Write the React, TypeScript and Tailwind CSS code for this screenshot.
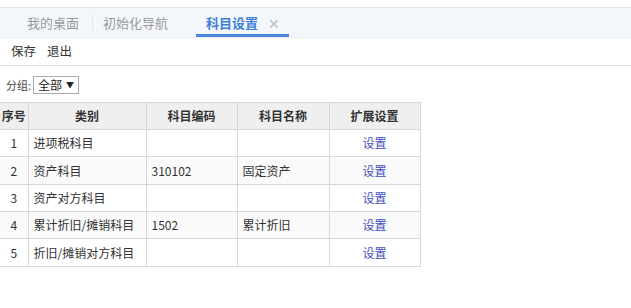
import React from 'react';

interface Row {
  id: number;
  category: string;
  code: string;
  name: string;
}

const rows: Row[] = [
  { id: 1, category: '进项税科目', code: '', name: '' },
  { id: 2, category: '资产科目', code: '310102', name: '固定资产' },
  { id: 3, category: '资产对方科目', code: '', name: '' },
  { id: 4, category: '累计折旧/摊销科目', code: '1502', name: '累计折旧' },
  { id: 5, category: '折旧/摊销对方科目', code: '', name: '' },
];

const font = { fontFamily: '"Noto Sans CJK SC", "Liberation Sans", sans-serif' };

const App: React.FC = () => {
  return (
    <div className="w-[631px] h-[308px] bg-white text-[12px] text-[#333]" style={font}>
      <div className="h-[7px]" />
      <div className="h-[31px] border-t border-[#e3e6ea] border-b border-b-[#e8ecf0] bg-[#f3f7fc] flex items-stretch">
        <div className="w-[27px]" />
        <div className="flex items-center text-[13px] text-[#9a9a9a] pr-[13px] my-[6px] border-r border-[#e4e8ec]">我的桌面</div>
        <div className="flex items-center text-[13px] text-[#9a9a9a] pl-[10px] w-[103px]">初始化导航</div>
        <div className="flex items-center gap-[10px] pl-[10px] pr-[9px] border-b-[3px] border-[#4a87dc] pt-[3px]">
          <span className="text-[13px] font-bold text-[#3d7fd6]">科目设置</span>
          <span className="text-[14px] text-[#b8bcc2] leading-none">✕</span>
        </div>
      </div>
      <div className="h-[28px] flex items-center gap-[11px] pl-[11px] border-b border-[#dcdcdc] text-[12.5px] text-[#333]">
        <span>保存</span>
        <span>退出</span>
      </div>
      <div className="h-[36px] flex items-center pl-[6px] pt-[2px] text-[11px] text-[#444]">
        <span>分组:</span>
        <div className="ml-[2px] w-[46px] h-[18px] border border-[#a9a9a9] bg-white flex items-center justify-between px-[4px] text-[12px] text-[#222]">
          <span>全部</span>
          <span className="text-[8px]">▼</span>
        </div>
      </div>
      <table className="border-collapse ml-0 text-[12px]">
        <thead>
          <tr className="h-[27px] bg-[#efefef] font-bold text-[#333]">
            <th className="w-[28px] border border-[#d8d8d8] border-l-0 text-center font-bold">序号</th>
            <th className="w-[118px] border border-[#d8d8d8] text-center font-bold">类别</th>
            <th className="w-[91px] border border-[#d8d8d8] text-center font-bold">科目编码</th>
            <th className="w-[92px] border border-[#d8d8d8] text-center font-bold">科目名称</th>
            <th className="w-[91px] border border-[#d8d8d8] text-center font-bold">扩展设置</th>
          </tr>
        </thead>
        <tbody>
          {rows.map(r => (
            <tr key={r.id} className={`${r.id === 2 || r.id === 5 ? 'h-[28px]' : 'h-[27px]'} ${r.id % 2 === 0 ? 'bg-[#fafafa]' : 'bg-white'}`}>
              <td className="border border-[#d8d8d8] border-l-0 text-center">{r.id}</td>
              <td className="border border-[#d8d8d8] pl-[5px]">{r.category}</td>
              <td className="border border-[#d8d8d8] pl-[5px]">{r.code}</td>
              <td className="border border-[#d8d8d8] pl-[5px]">{r.name}</td>
              <td className="border border-[#d8d8d8] text-center text-[#3f4fc0]">设置</td>
            </tr>
          ))}
        </tbody>
      </table>
    </div>
  );
};

export default App;
